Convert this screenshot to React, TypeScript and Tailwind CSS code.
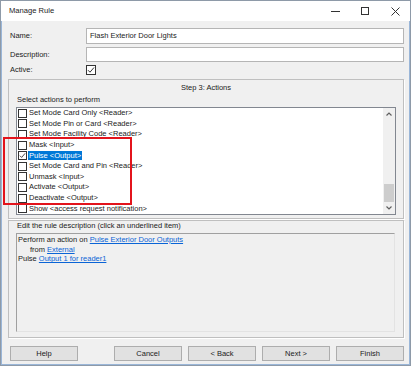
import { type ReactNode } from "react";

const actions = [
  { label: "Set Mode Card Only <Reader>" },
  { label: "Set Mode Pin or Card <Reader>" },
  { label: "Set Mode Facility Code <Reader>" },
  { label: "Mask <Input>" },
  { label: "Pulse <Output>", checked: true, selected: true },
  { label: "Set Mode Card and Pin <Reader>" },
  { label: "Unmask <Input>" },
  { label: "Activate <Output>" },
  { label: "Deactivate <Output>" },
  { label: "Show <access request notification>" },
];

function Check({ checked, size = 9 }: { checked?: boolean; size?: number }) {
  return (
    <div
      className="flex items-center justify-center border border-[#333] bg-white shrink-0"
      style={{ width: size, height: size }}
    >
      {checked && (
        <svg width={size - 2} height={size - 2} viewBox="0 0 8 8">
          <path d="M1 4.2 L3 6.2 L7 1.5" fill="none" stroke="#333" strokeWidth="1" />
        </svg>
      )}
    </div>
  );
}

function Link({ children }: { children: ReactNode }) {
  return <span className="text-[#0a64d6] underline">{children}</span>;
}

function Button({ children }: { children: ReactNode }) {
  return (
    <div className="w-[68px] h-[15px] flex items-center justify-center bg-[#e1e1e1] border border-[#adadad]">
      {children}
    </div>
  );
}

export default function App() {
  return (
    <div className="relative w-[411px] h-[366px] flex flex-col border border-[#8e9aa8] bg-white overflow-hidden font-['Liberation_Sans',Arial,sans-serif] text-[7.5px] leading-[10px] text-[#1b1b1b]">
      {/* title bar */}
      <div className="h-[20px] flex items-center bg-white shrink-0">
        <span className="pl-[8px] text-[7.6px]">Manage Rule</span>
        <div className="ml-auto flex items-center h-full">
          <div className="w-[30px] flex justify-center">
            <div className="w-[9px] h-px bg-[#333]" />
          </div>
          <div className="w-[30px] flex justify-center">
            <div className="w-[8px] h-[8px] border border-[#333]" />
          </div>
          <div className="w-[30px] flex justify-center">
            <svg width="9" height="9" viewBox="0 0 9 9">
              <path d="M0.5 0.5 L8.5 8.5 M8.5 0.5 L0.5 8.5" stroke="#333" strokeWidth="1" />
            </svg>
          </div>
        </div>
      </div>

      {/* body */}
      <div className="flex-1 flex flex-col bg-[#f0f0f0] border-x border-b border-[#9ab6d8] pl-[6px] pr-[5px] pt-[7px]">
        <div className="h-[16px] flex items-center">
          <span className="w-[78px] pl-[2px]">Name:</span>
          <div className="flex-1 h-full flex items-center px-[3px] bg-white border border-[#b5b5b5]">
            Flash Exterior Door Lights
          </div>
        </div>
        <div className="h-[15px] mt-[3px] flex items-center">
          <span className="w-[78px] pl-[2px]">Description:</span>
          <div className="flex-1 h-full bg-white border border-[#b5b5b5]" />
        </div>
        <div className="h-[16px] flex items-center">
          <span className="w-[78px] pl-[2px]">Active:</span>
          <Check checked size={10} />
        </div>

        {/* step 3 group */}
        <div className="mt-[1px] h-[140px] flex flex-col border border-[#bfbfbf] shadow-[1px_1px_0_#fff] pl-[7px] pr-[7px]">
          <div className="h-[10px] mt-[3px] text-center">Step 3: Actions</div>
          <div className="h-[10px] mt-[2px] pl-[1px]">Select actions to perform</div>
          <div className="mt-[2px] h-[108px] flex bg-white border border-[#828790]">
            <div className="flex-1 flex flex-col pl-[1px]">
              {actions.map((a, i) => (
                <div key={i} className="h-[10.6px] flex items-center gap-[1px]">
                  <Check checked={a.checked} />
                  <span
                    className={
                      a.selected
                        ? "bg-[#0078d7] text-white px-[1px] leading-[9px]"
                        : "px-[1px] whitespace-nowrap"
                    }
                  >
                    {a.label}
                  </span>
                </div>
              ))}
            </div>
            <div className="w-[12px] flex flex-col bg-[#f0f0f0]">
              <div className="h-[12px] flex items-center justify-center">
                <svg width="6" height="4" viewBox="0 0 6 4">
                  <path d="M0.5 3.5 L3 1 L5.5 3.5" fill="none" stroke="#606060" strokeWidth="1.2" />
                </svg>
              </div>
              <div className="flex-1 flex flex-col justify-end px-[1px]">
                <div className="h-[18px] bg-[#cdcdcd]" />
              </div>
              <div className="h-[12px] flex items-center justify-center">
                <svg width="6" height="4" viewBox="0 0 6 4">
                  <path d="M0.5 0.5 L3 3 L5.5 0.5" fill="none" stroke="#606060" strokeWidth="1.2" />
                </svg>
              </div>
            </div>
          </div>
        </div>

        {/* rule description group */}
        <div className="mt-[1px] h-[118px] flex flex-col border border-[#bfbfbf] shadow-[1px_1px_0_#fff] pl-[7px] pr-[8px] pb-[5px]">
          <div className="h-[10px] pl-[1px]">Edit the rule description (click an underlined item)</div>
          <div className="mt-[2px] flex-1 border-t border-l border-[#a0a0a0] border-r border-b border-r-[#e3e3e3] border-b-[#e3e3e3] pl-[1px] pt-[1px] leading-[9.6px]">
            <div>
              Perform an action on <Link>Pulse Exterior Door Outputs</Link>
            </div>
            <div className="pl-[12px]">
              from <Link>External</Link>
            </div>
            <div>
              Pulse <Link>Output 1 for reader1</Link>
            </div>
          </div>
        </div>

        {/* buttons */}
        <div className="mt-[8px] flex items-center pl-[2px]">
          <Button>Help</Button>
          <div className="ml-auto flex gap-[6px]">
            <Button>Cancel</Button>
            <Button>&lt; Back</Button>
            <Button>Next &gt;</Button>
            <Button>Finish</Button>
          </div>
        </div>
      </div>

      {/* annotation highlight */}
      <div className="absolute left-[2px] top-[136px] w-[129px] h-[68px] border-2 border-[#e3141c]" />
    </div>
  );
}
